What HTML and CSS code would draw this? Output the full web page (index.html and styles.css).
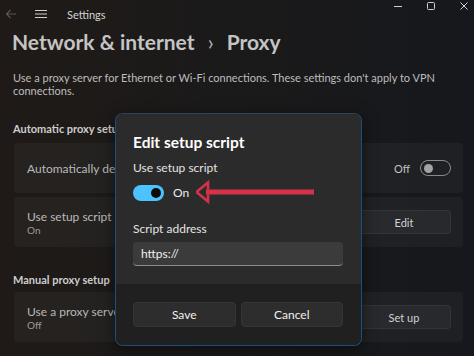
FILE: index.html
```html
<!DOCTYPE html>
<html>
  <head>
    <title>Settings - Proxy</title>
    <meta name="viewport" content="width=device-width, initial-scale=1">
    <link rel="stylesheet" href="styles.css">
  </head>
  <body>
  <div class="window">
    <div class="titlebar">
      <div class="tb-left">
        <svg class="back" width="12" height="12" viewBox="0 0 12 12"><path d="M11 6H1.5M5.5 2L1.5 6l4 4" fill="none" stroke="#5a5756" stroke-width="1.1"/></svg>
        <svg class="burger" width="12" height="10" viewBox="0 0 12 10"><path d="M0 1.5h12M0 5h12M0 8.5h12" stroke="#cfcfcf" stroke-width="1.2"/></svg>
        <span class="app-name">Settings</span>
      </div>
      <div class="tb-controls">
        <svg width="10" height="10" viewBox="0 0 10 10"><path d="M1 5.5h8" stroke="#d0d0d0" stroke-width="1"/></svg>
        <svg width="10" height="10" viewBox="0 0 10 10"><rect x="1.5" y="1.5" width="7" height="7" rx="1" fill="none" stroke="#d0d0d0" stroke-width="1"/></svg>
        <svg width="10" height="10" viewBox="0 0 10 10"><path d="M1.5 1.5l7 7M8.5 1.5l-7 7" stroke="#d0d0d0" stroke-width="1"/></svg>
      </div>
    </div>

    <h1 class="crumbs">Network &amp; internet <span class="sep">›</span> Proxy</h1>
    <p class="desc">Use a proxy server for Ethernet or Wi-Fi connections. These settings don't apply to VPN connections.</p>

    <div class="section-label">Automatic proxy setup</div>
    <div class="card">
      <div class="card-text">Automatically detect settings</div>
      <div class="card-action">
        <span class="state">Off</span>
        <span class="toggle off"><span class="knob"></span></span>
      </div>
    </div>
    <div class="card">
      <div class="card-text">Use setup script<div class="sub">On</div></div>
      <div class="card-action"><button class="btn">Edit</button></div>
    </div>

    <div class="section-label manual">Manual proxy setup</div>
    <div class="card">
      <div class="card-text">Use a proxy server<div class="sub">Off</div></div>
      <div class="card-action"><button class="btn">Set up</button></div>
    </div>

    <div class="dialog">
      <div class="dialog-body">
        <div class="dialog-title">Edit setup script</div>
        <div class="field-label">Use setup script</div>
        <div class="toggle-row">
          <span class="toggle on"><span class="knob"></span></span>
          <span class="toggle-state">On</span>
        </div>
        <div class="field-label addr">Script address</div>
        <div class="input"><span class="input-text">https://</span></div>
      </div>
      <div class="dialog-foot">
        <button class="btn dlg">Save</button>
        <button class="btn dlg">Cancel</button>
      </div>
    </div>

    <svg class="arrow" width="130" height="26" viewBox="0 0 130 26">
      <rect x="12" y="10.5" width="108" height="5" fill="#d6334b"/>
      <path d="M2.5 13L14 3.5V10.5M14 15.5V22.5L2.5 13" fill="none" stroke="#d6334b" stroke-width="2.6" stroke-linejoin="miter"/>
    </svg>
  </div>
  </body>
</html>
```

FILE: styles.css
```css
* {
  box-sizing: border-box;
  margin: 0;
  padding: 0;
}
html, body {
  background-color: #17171a;
}
body {
  width: 474px;
  height: 356px;
  overflow: hidden;
  font-family: "Lato", "Noto Sans", sans-serif;
  color: #c9c9c9;
}
.window {
  position: relative;
  width: 474px;
  height: 356px;
  background: linear-gradient(90deg, #1f1a17 0%, #1b1a1a 45%, #16181d 100%);
  padding: 0 11px 0 14px;
}
.titlebar {
  height: 28px;
  display: flex;
  justify-content: space-between;
  align-items: center;
  margin-left: -14px;
  margin-right: -11px;
}
.tb-left {
  display: flex;
  align-items: center;
  padding-left: 5px;
}
.back {
  margin-right: 18px;
}
.burger {
  margin-right: 20px;
}
.app-name {
  font-size: 11px;
  color: #d4d4d4;
}
.tb-controls {
  display: flex;
  gap: 23px;
  padding-right: 5px;
  margin-top: -16px;
}
.crumbs {
  font-size: 21px;
  font-weight: 700;
  line-height: 28px;
  color: #c4c4c4;
  margin-left: -2px;
}
.crumbs .sep {
  font-weight: 400;
  margin: 0 8px;
  color: #b0b0b0;
}
.desc {
  font-size: 11px;
  line-height: 13px;
  margin-top: 15px;
  color: #bdbdbd;
  width: 440px;
  margin-left: -1px;
}
.section-label {
  font-size: 11px;
  font-weight: 700;
  line-height: 14px;
  margin-top: 25px;
  margin-bottom: 7px;
  color: #cdcdcd;
  margin-left: -1px;
}
.section-label.manual {
  margin-top: 26px;
  margin-bottom: 5px;
}
.card {
  height: 50px;
  display: flex;
  align-items: center;
  justify-content: space-between;
  background-color: rgba(255, 255, 255, 0.035);
  border-radius: 4px;
  padding: 0 12px 0 13px;
  margin-bottom: 4px;
  font-size: 12px;
  color: #b9b9b9;
}
.sub {
  font-size: 10px;
  color: #9a9a9a;
  line-height: 12px;
}
.card-action {
  display: flex;
  align-items: center;
}
.state {
  font-size: 11px;
  margin-right: 10px;
  color: #c0c0c0;
}
.toggle {
  display: flex;
  align-items: center;
  width: 31px;
  height: 16px;
  border-radius: 8px;
  padding: 0 3px;
}
.toggle.off {
  border: 1px solid #8a8a8a;
}
.toggle.off .knob {
  width: 9px;
  height: 9px;
  border-radius: 50%;
  background-color: #a3a3a3;
}
.toggle.on {
  background-color: #4cc2ff;
  justify-content: flex-end;
}
.toggle.on .knob {
  width: 10px;
  height: 10px;
  border-radius: 50%;
  background-color: #0a0a0a;
}
.btn {
  font-family: "Lato", "Noto Sans", sans-serif;
  font-size: 11px;
  color: #d2d2d2;
  background-color: rgba(255, 255, 255, 0.045);
  border: 1px solid rgba(255, 255, 255, 0.05);
  border-radius: 4px;
  width: 94px;
  height: 24px;
}
.dialog {
  position: absolute;
  left: 115px;
  top: 113px;
  width: 247px;
  height: 233px;
  border: 1px solid #1c4f80;
  border-top-color: #2f4256;
  border-radius: 8px;
  overflow: hidden;
  display: flex;
  flex-direction: column;
  box-shadow: 0 4px 16px rgba(0, 0, 0, 0.5);
}
.dialog-body {
  background-color: #2b2b2b;
  padding: 17px 18px 0 17px;
  height: 170px;
}
.dialog-title {
  font-size: 15.5px;
  font-weight: 700;
  line-height: 23px;
  color: #ffffff;
}
.field-label {
  font-size: 12px;
  line-height: 16px;
  margin-top: 6px;
  color: #e4e4e4;
}
.field-label.addr {
  margin-top: 20px;
}
.toggle-row {
  display: flex;
  align-items: center;
  margin-top: 8px;
  height: 17px;
}
.toggle-state {
  font-size: 12px;
  margin-left: 9px;
  color: #ececec;
}
.input {
  margin-top: 5px;
  height: 24px;
  background-color: #3b3b3b;
  border-radius: 4px;
  border-bottom: 1px solid #8c8c8c;
  display: flex;
  align-items: center;
  padding-left: 8px;
}
.input-text {
  font-size: 12px;
  color: #f0f0f0;
}
.dialog-foot {
  flex: 1;
  background-color: #202020;
  display: flex;
  gap: 5px;
  padding: 18px 18px 0 17px;
}
.btn.dlg {
  flex: 1;
  height: 25px;
  font-size: 12px;
  color: #f0f0f0;
  background-color: #2d2d2d;
  border: 1px solid #353535;
}
.arrow {
  position: absolute;
  left: 194px;
  top: 179px;
}
```
